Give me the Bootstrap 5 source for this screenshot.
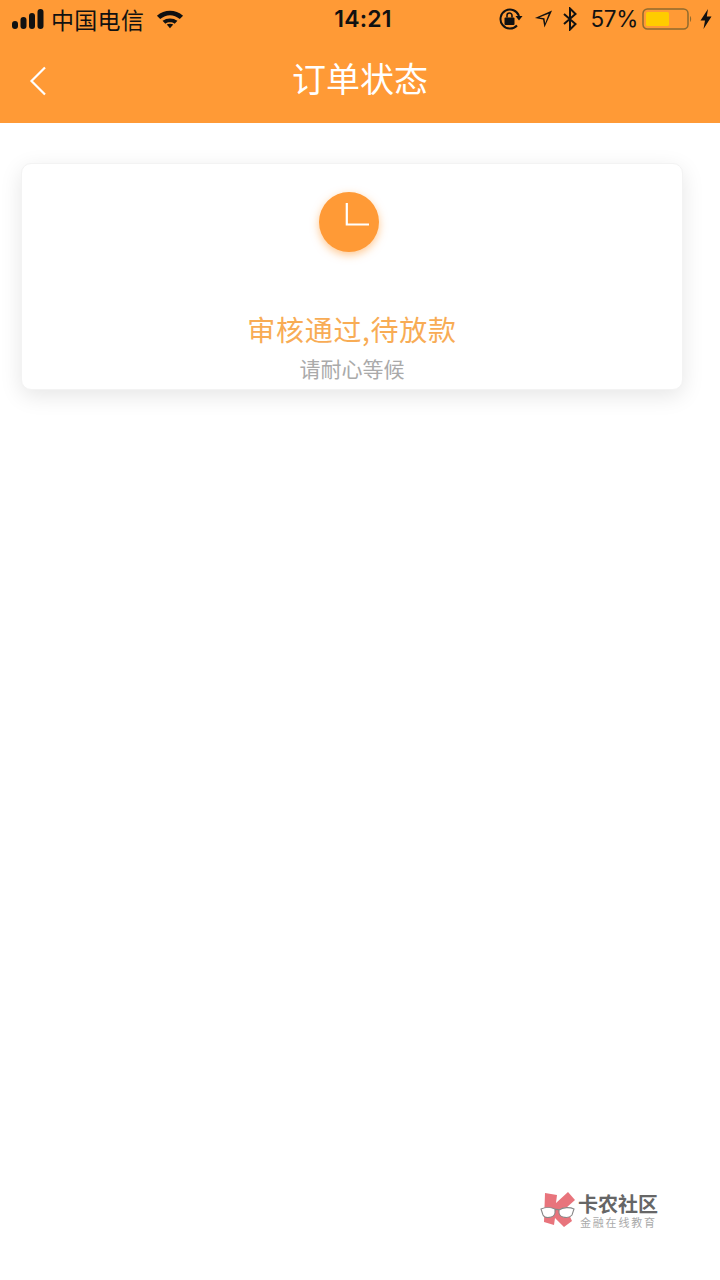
<!DOCTYPE html>
<html lang="zh-CN">
<head>
  <meta charset="UTF-8">
  <title>订单状态</title>
  <link href="https://cdn.jsdelivr.net/npm/bootstrap@5.3.0/dist/css/bootstrap.min.css" rel="stylesheet">
  <style>
    body { font-family: "Noto Sans CJK SC", "Liberation Sans", sans-serif; background: #fff; height: 1280px; overflow: hidden; }
    .app-top { background: #ff9a36; height: 123px; }
    .status-row { height: 38px; padding: 0 8px 0 12px; color: #111; }
    .carrier { font-size: 23px; line-height: 38px; margin-left: 7px; letter-spacing: .3px; }
    .wifi-icon { margin-left: 12px; }
    .clock-text { font-family: Inter, "Liberation Sans", sans-serif; font-size: 23px; font-weight: 600; line-height: 38px; letter-spacing: .2px; margin-left: 2px; }
    .pct { font-family: Inter, "Liberation Sans", sans-serif; font-size: 22.500px; line-height: 38px; margin-left: 12px; letter-spacing: -.3px; }
    .status-side { flex: 1 1 0; min-width: 0; }
    .loc-icon { margin-left: 11px; }
    .bt-icon { margin-left: 9px; }
    .batt-icon { margin-left: 4px; }
    .bolt-icon { margin-left: 8px; }
    .title-row { height: 85px; padding-bottom: 5px; }
    .page-name { color: #fff; font-size: 34px; line-height: 1; }
    .back-link { left: 29px; top: 28px; width: 18px; height: 30px; }
    .status-card { margin: 40px 37px 0 21px; height: 227px; border: 1px solid #f3f3f3; border-radius: 10px; box-shadow: 0 6px 22px rgba(0,0,0,.1); padding-top: 28px; }
    .clock-dot { width: 60px; height: 60px; background: #ff9a36; box-shadow: 0 3px 8px rgba(255,154,54,.55); margin-right: 7px; }
    .state-text { color: #f8ac55; font-size: 28px; line-height: 1; margin-top: 63px; letter-spacing: .7px; }
    .state-hint { color: #aaa; font-size: 21px; line-height: 1; margin-top: 15px; }
    .watermark { left: 540px; top: 1192px; }
    .wm-text { margin-left: 2px; }
    .wm-name { color: #666; font-size: 20px; font-weight: 700; line-height: 20px; padding-top: 2px; }
    .wm-sub { color: #aaa; font-size: 11px; line-height: 12px; letter-spacing: 1.800px; margin-top: 2px; padding-left: 2px; white-space: nowrap; }
  </style>
</head>
<body class="position-relative">

<div class="app-top">
  <div class="status-row d-flex align-items-center">
    <div class="status-side d-flex align-items-center">
      <svg width="32" height="20" viewBox="0 0 32 20">
        <g fill="#111">
          <rect x="0" y="12" width="6" height="8" rx="3"/>
          <rect x="8.500" y="8" width="6" height="12" rx="3"/>
          <rect x="17" y="4" width="6" height="16" rx="3"/>
          <rect x="25.500" y="0" width="6" height="20" rx="3"/>
        </g>
      </svg>
      <span class="carrier">中国电信</span>
      <svg class="wifi-icon" width="28" height="20" viewBox="0 0 30 20">
        <path d="M1 6.500 C9 -0.500 21 -0.500 29 6.500 L25.500 10 C19 4.500 11 4.500 4.500 10 Z" fill="#111"/>
        <path d="M7 12 C11.500 8.500 18.500 8.500 23 12 L20 15 C17 13 13 13 10 15 Z" fill="#111"/>
        <path d="M11.500 16 C13.500 14.700 16.500 14.700 18.500 16 L15 20 Z" fill="#111"/>
      </svg>
    </div>
    <span class="clock-text">14:21</span>
    <div class="status-side d-flex align-items-center justify-content-end">
      <svg width="24" height="22" viewBox="0 0 24 22">
        <path d="M18 17.500 A9.500 9.500 0 1 1 20 8" fill="none" stroke="#111" stroke-width="2"/>
        <path d="M16.500 8 L23.500 8 L20 12.500 Z" fill="#111"/>
        <rect x="5.500" y="9.500" width="10" height="7.500" rx="1" fill="#111"/>
        <path d="M8 9.500 V7.500 A2.500 2.500 0 0 1 13 7.500 V9.500" fill="none" stroke="#111" stroke-width="1.600"/>
      </svg>
      <svg class="loc-icon" width="19" height="20" viewBox="0 0 20 20">
        <path d="M19 1 L11 19 L9.500 10.500 L1 9 Z M15.500 4.500 L5.500 8.500 L11 9.200 L11.800 14.500 Z" fill="#111" fill-rule="evenodd"/>
      </svg>
      <svg class="bt-icon" width="16" height="24" viewBox="0 0 16 24">
        <path d="M2 7 L13.500 17 L8 22.500 V1.500 L13.500 7 L2 17" fill="none" stroke="#111" stroke-width="2"/>
      </svg>
      <span class="pct">57%</span>
      <svg class="batt-icon" width="50" height="22" viewBox="0 0 50 22">
        <rect x="1" y="1" width="45" height="20" rx="4.500" fill="none" stroke="#8f6a2e" stroke-width="1.500"/>
        <rect x="4" y="4" width="23" height="14" rx="1.500" fill="#ffcc00"/>
        <path d="M48 8 C49.500 9 49.500 13 48 14 Z" fill="#8f6a2e"/>
      </svg>
      <svg class="bolt-icon" width="12" height="20" viewBox="0 0 12 20">
        <path d="M8 0 L0.500 11.500 H5 L3.500 20 L11.500 7.500 H6.800 Z" fill="#111"/>
      </svg>
    </div>
  </div>
  <div class="title-row position-relative d-flex align-items-center justify-content-center">
    <a class="back-link position-absolute d-block" href="#" aria-label="返回">
      <svg class="d-block" width="18" height="30" viewBox="0 0 18 30">
        <path d="M16 1.500 L2.500 15 L16 28.500" fill="none" stroke="#fff" stroke-width="2.200"/>
      </svg>
    </a>
    <span class="page-name">订单状态</span>
  </div>
</div>

<div class="status-card bg-white d-flex flex-column align-items-center">
  <div class="clock-dot rounded-circle d-flex align-items-center justify-content-center flex-shrink-0">
    <svg width="60" height="60" viewBox="0 0 60 60">
      <path d="M27.800 11 V32.500 H50" fill="none" stroke="#fff" stroke-width="2.200"/>
    </svg>
  </div>
  <div class="state-text">审核通过,待放款</div>
  <div class="state-hint">请耐心等候</div>
</div>

<div class="watermark position-absolute d-flex align-items-start">
  <svg class="flex-shrink-0" width="36" height="36" viewBox="0 0 36 36">
    <path d="M5 1 L17 3 L16 11 L28 0 L35 8 L26 16 L32 29 L24 35 L15 26 L14 33 L4 30 Z" fill="#e8747c"/>
    <path d="M1 17 C5 15 11 15 15 17 L15 21 C14 26 5 27 3 23 Z" fill="#fff" stroke="#888" stroke-width="1.100"/>
    <path d="M19 18 C23 15 30 15 34 17 L32 23 C29 27 20 26 19 21 Z" fill="#fff" stroke="#888" stroke-width="1.100"/>
    <path d="M15 18 C16.500 17 17.500 17 19 18" fill="none" stroke="#888" stroke-width="1.100"/>
  </svg>
  <div class="wm-text">
    <div class="wm-name">卡农社区</div>
    <div class="wm-sub">金融在线教育</div>
  </div>
</div>

<script src="https://cdn.jsdelivr.net/npm/bootstrap@5.3.0/dist/js/bootstrap.bundle.min.js"></script>
</body>
</html>
